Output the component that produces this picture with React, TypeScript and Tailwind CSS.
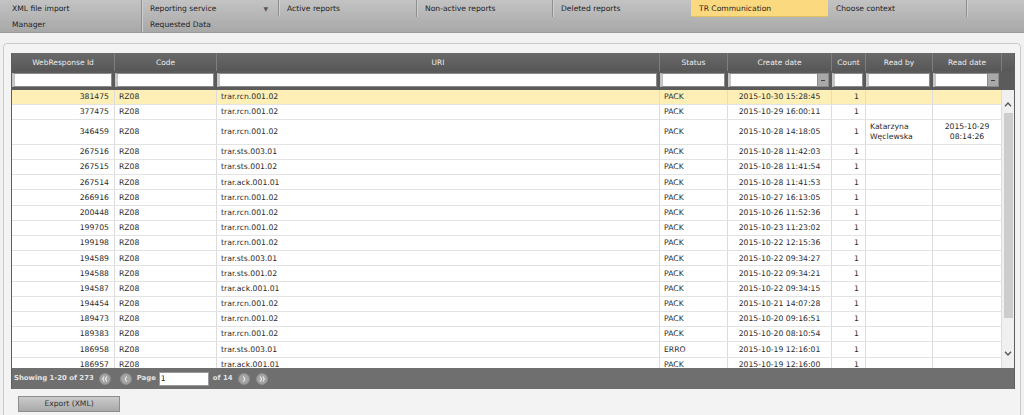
import React from "react";

type Row = {
  id: string;
  uri: string;
  status: string;
  date: string;
  readBy?: [string, string];
  readDate?: [string, string];
};

const rows: Row[] = [
  { id: "381475", uri: "trar.rcn.001.02", status: "PACK", date: "2015-10-30 15:28:45" },
  { id: "377475", uri: "trar.rcn.001.02", status: "PACK", date: "2015-10-29 16:00:11" },
  {
    id: "346459",
    uri: "trar.rcn.001.02",
    status: "PACK",
    date: "2015-10-28 14:18:05",
    readBy: ["Katarzyna", "Węclewska"],
    readDate: ["2015-10-29", "08:14:26"],
  },
  { id: "267516", uri: "trar.sts.003.01", status: "PACK", date: "2015-10-28 11:42:03" },
  { id: "267515", uri: "trar.sts.001.02", status: "PACK", date: "2015-10-28 11:41:54" },
  { id: "267514", uri: "trar.ack.001.01", status: "PACK", date: "2015-10-28 11:41:53" },
  { id: "266916", uri: "trar.rcn.001.02", status: "PACK", date: "2015-10-27 16:13:05" },
  { id: "200448", uri: "trar.rcn.001.02", status: "PACK", date: "2015-10-26 11:52:36" },
  { id: "199705", uri: "trar.rcn.001.02", status: "PACK", date: "2015-10-23 11:23:02" },
  { id: "199198", uri: "trar.rcn.001.02", status: "PACK", date: "2015-10-22 12:15:36" },
  { id: "194589", uri: "trar.sts.003.01", status: "PACK", date: "2015-10-22 09:34:27" },
  { id: "194588", uri: "trar.sts.001.02", status: "PACK", date: "2015-10-22 09:34:21" },
  { id: "194587", uri: "trar.ack.001.01", status: "PACK", date: "2015-10-22 09:34:15" },
  { id: "194454", uri: "trar.rcn.001.02", status: "PACK", date: "2015-10-21 14:07:28" },
  { id: "189473", uri: "trar.rcn.001.02", status: "PACK", date: "2015-10-20 09:16:51" },
  { id: "189383", uri: "trar.rcn.001.02", status: "PACK", date: "2015-10-20 08:10:54" },
  { id: "186958", uri: "trar.sts.003.01", status: "ERRO", date: "2015-10-19 12:16:01" },
  { id: "186957", uri: "trar.ack.001.01", status: "PACK", date: "2015-10-19 12:16:00" },
];

function NavItem({
  label,
  sep = true,
  active = false,
  caret = false,
  top = true,
}: {
  label: string;
  sep?: boolean;
  active?: boolean;
  caret?: boolean;
  top?: boolean;
}) {
  return (
    <div
      className={
        "relative flex items-center pl-[8px] pr-[8px] " +
        (top ? "h-[17px] pt-[1px] " : "h-[16px] pt-[1px] ") +
        (sep ? "border-r border-r-[#8e8e8e] shadow-[1px_0_0_#cfcfcf] " : "") +
        (active ? "bg-[#fbd97f] border-b border-b-[#e2bf60]" : "")
      }
    >
      <span className="flex-1">{label}</span>
      {caret && <span className="text-[6px] text-[#555] mr-[2px]">▼</span>}
    </div>
  );
}

function Nav() {
  return (
    <div className="h-[33px] flex pl-[4px] bg-linear-to-b from-[#c3c3c3] to-[#a8a8a8] border-b border-[#9a9a9a] text-[7.6px] text-[#1f1f1f]">
      <div className="w-[138px] flex flex-col">
        <NavItem label="XML file import" />
        <NavItem label="Manager" top={false} />
      </div>
      <div className="w-[137px] flex flex-col">
        <NavItem label="Reporting service" caret />
        <NavItem label="Requested Data" sep={false} top={false} />
      </div>
      <div className="w-[138px]">
        <NavItem label="Active reports" />
      </div>
      <div className="w-[136px]">
        <NavItem label="Non-active reports" />
      </div>
      <div className="w-[138px]">
        <NavItem label="Deleted reports" sep={false} />
      </div>
      <div className="w-[137px]">
        <NavItem label="TR Communication" active sep={false} />
      </div>
      <div className="w-[139px]">
        <NavItem label="Choose context" />
      </div>
    </div>
  );
}

const gridCols = "grid grid-cols-[103px_102px_443px_68px_104px_34px_67px_69px]";
const headCols = "grid grid-cols-[103px_102px_443px_68px_104px_34px_67px_69px_12px]";

const headers = ["WebResponse Id", "Code", "URI", "Status", "Create date", "Count", "Read by", "Read date"];

function FilterInput({ dropdown = false }: { dropdown?: boolean }) {
  return (
    <div className="pr-[3px] h-full flex items-center">
      <div className="w-full h-[14px] bg-white border border-[#8a8a8a] border-l-[3px] border-l-[#c6c6c6] flex justify-end">
        {dropdown && (
          <div className="w-[11px] h-full bg-[#a9a9a9] border-l border-[#8c8c8c] flex items-center justify-center">
            <div className="w-[4px] h-[1.5px] bg-[#444]" />
          </div>
        )}
      </div>
    </div>
  );
}

function Chevron({ up }: { up: boolean }) {
  return (
    <svg width="8" height="5" viewBox="0 0 8 5">
      <polyline
        points={up ? "1,4.2 4,1 7,4.2" : "1,0.8 4,4 7,0.8"}
        fill="none"
        stroke="#555"
        strokeWidth="1.3"
      />
    </svg>
  );
}

function PagerBtn({ dir, double }: { dir: "l" | "r"; double?: boolean }) {
  const pts =
    dir === "l"
      ? double
        ? ["5,3 3.2,6 5,9", "8.3,3 6.5,6 8.3,9"]
        : ["6.8,3 5,6 6.8,9"]
      : double
        ? ["3.7,3 5.5,6 3.7,9", "7,3 8.8,6 7,9"]
        : ["5.2,3 7,6 5.2,9"];
  return (
    <div className="w-[12px] h-[12px] rounded-full bg-[#a4a4a4] border border-[#8c8c8c] flex items-center justify-center">
      <svg width="12" height="12" viewBox="0 0 12 12">
        {pts.map((p, i) => (
          <polyline key={i} points={p} fill="none" stroke="#efefef" strokeWidth="1.3" />
        ))}
      </svg>
    </div>
  );
}

function Table() {
  return (
    <div className="w-[1004px] border-x border-[#5e5e5e]">
      <div className={headCols + " h-[18px] bg-linear-to-b from-[#6a6a6a] to-[#575757] text-[#ececec] text-[7.5px]"}>
        {headers.map((h) => (
          <div key={h} className="flex items-center justify-center pt-[1px] border-r border-[#7f7f7f]">
            {h}
          </div>
        ))}
        <div />
      </div>
      <div className={headCols + " h-[18.5px] bg-[#5b5b5b]"}>
        <FilterInput />
        <FilterInput />
        <FilterInput />
        <FilterInput />
        <FilterInput dropdown />
        <FilterInput />
        <FilterInput />
        <FilterInput dropdown />
        <div />
      </div>
      <div className="flex h-[278.5px] overflow-hidden bg-white">
        <div className="w-[990px] text-[7.7px] text-[#2b2b2b]">
          {rows.map((r, i) => {
            const tall = !!r.readBy;
            return (
              <div
                key={r.id}
                className={
                  gridCols +
                  " border-b border-[#e3e3e3] " +
                  (tall ? "h-[25px] " : "h-[15.2px] ") +
                  (i === 0 ? "bg-[#fdefb6]" : "bg-white")
                }
              >
                <div className="flex items-center justify-end pr-[5px] border-r border-[#dcdcdc]">{r.id}</div>
                <div className="flex items-center pl-[4px] border-r border-[#dcdcdc]">RZ08</div>
                <div className="flex items-center pl-[4px] border-r border-[#dcdcdc]">{r.uri}</div>
                <div className="flex items-center pl-[4px] border-r border-[#dcdcdc]">{r.status}</div>
                <div className="flex items-center justify-center border-r border-[#dcdcdc]">{r.date}</div>
                <div className="flex items-center justify-end pr-[6px] border-r border-[#dcdcdc]">1</div>
                <div className="flex flex-col justify-center pl-[4px] leading-[9.5px] border-r border-[#dcdcdc]">
                  {r.readBy && (
                    <>
                      <span>{r.readBy[0]}</span>
                      <span>{r.readBy[1]}</span>
                    </>
                  )}
                </div>
                <div className="flex flex-col items-center justify-center leading-[9.5px] border-r border-[#dcdcdc]">
                  {r.readDate && (
                    <>
                      <span>{r.readDate[0]}</span>
                      <span>{r.readDate[1]}</span>
                    </>
                  )}
                </div>
              </div>
            );
          })}
        </div>
        <div className="w-[12px] bg-[#f0f0f0] flex flex-col items-center">
          <div className="h-[12px]" />
          <Chevron up />
          <div className="h-[6px]" />
          <div className="w-[9px] h-[205px] bg-[#cdcdcd]" />
          <div className="h-[33px]" />
          <Chevron up={false} />
        </div>
      </div>
      <div className="h-[21px] bg-[#6f6f6f] flex items-center pl-[2px] text-[#e4e4e4] text-[6.9px] font-bold">
        <span>Showing 1-20 of 273</span>
        <div className="ml-[5px]">
          <PagerBtn dir="l" double />
        </div>
        <div className="ml-[9px]">
          <PagerBtn dir="l" />
        </div>
        <span className="ml-[5px]">Page</span>
        <div className="ml-[3px] w-[50px] h-[14px] bg-white border border-[#9a9a9a] flex items-center pl-[1px] text-[#222] font-normal text-[7.7px]">
          1
        </div>
        <span className="ml-[4px]">of 14</span>
        <div className="ml-[5px]">
          <PagerBtn dir="r" />
        </div>
        <div className="ml-[6px]">
          <PagerBtn dir="r" double />
        </div>
      </div>
    </div>
  );
}

export default function App() {
  return (
    <div className="w-[1024px] h-[415px] overflow-hidden bg-[#f1f1f1] font-['DejaVu_Sans',sans-serif]">
      <Nav />
      <div className="mt-[10px] ml-[3px] mr-[3px] h-[380px] border border-[#c9c9c9] rounded-t-[4px] bg-[#f3f3f3] pt-[9px] pl-[7px]">
        <Table />
        <button className="mt-[7px] ml-[7px] w-[102px] h-[16px] bg-linear-to-b from-[#cbcbcb] to-[#a9a9a9] border border-[#8d8d8d] text-[#333] text-[7.6px] flex items-center justify-center">
          Export (XML)
        </button>
      </div>
    </div>
  );
}
